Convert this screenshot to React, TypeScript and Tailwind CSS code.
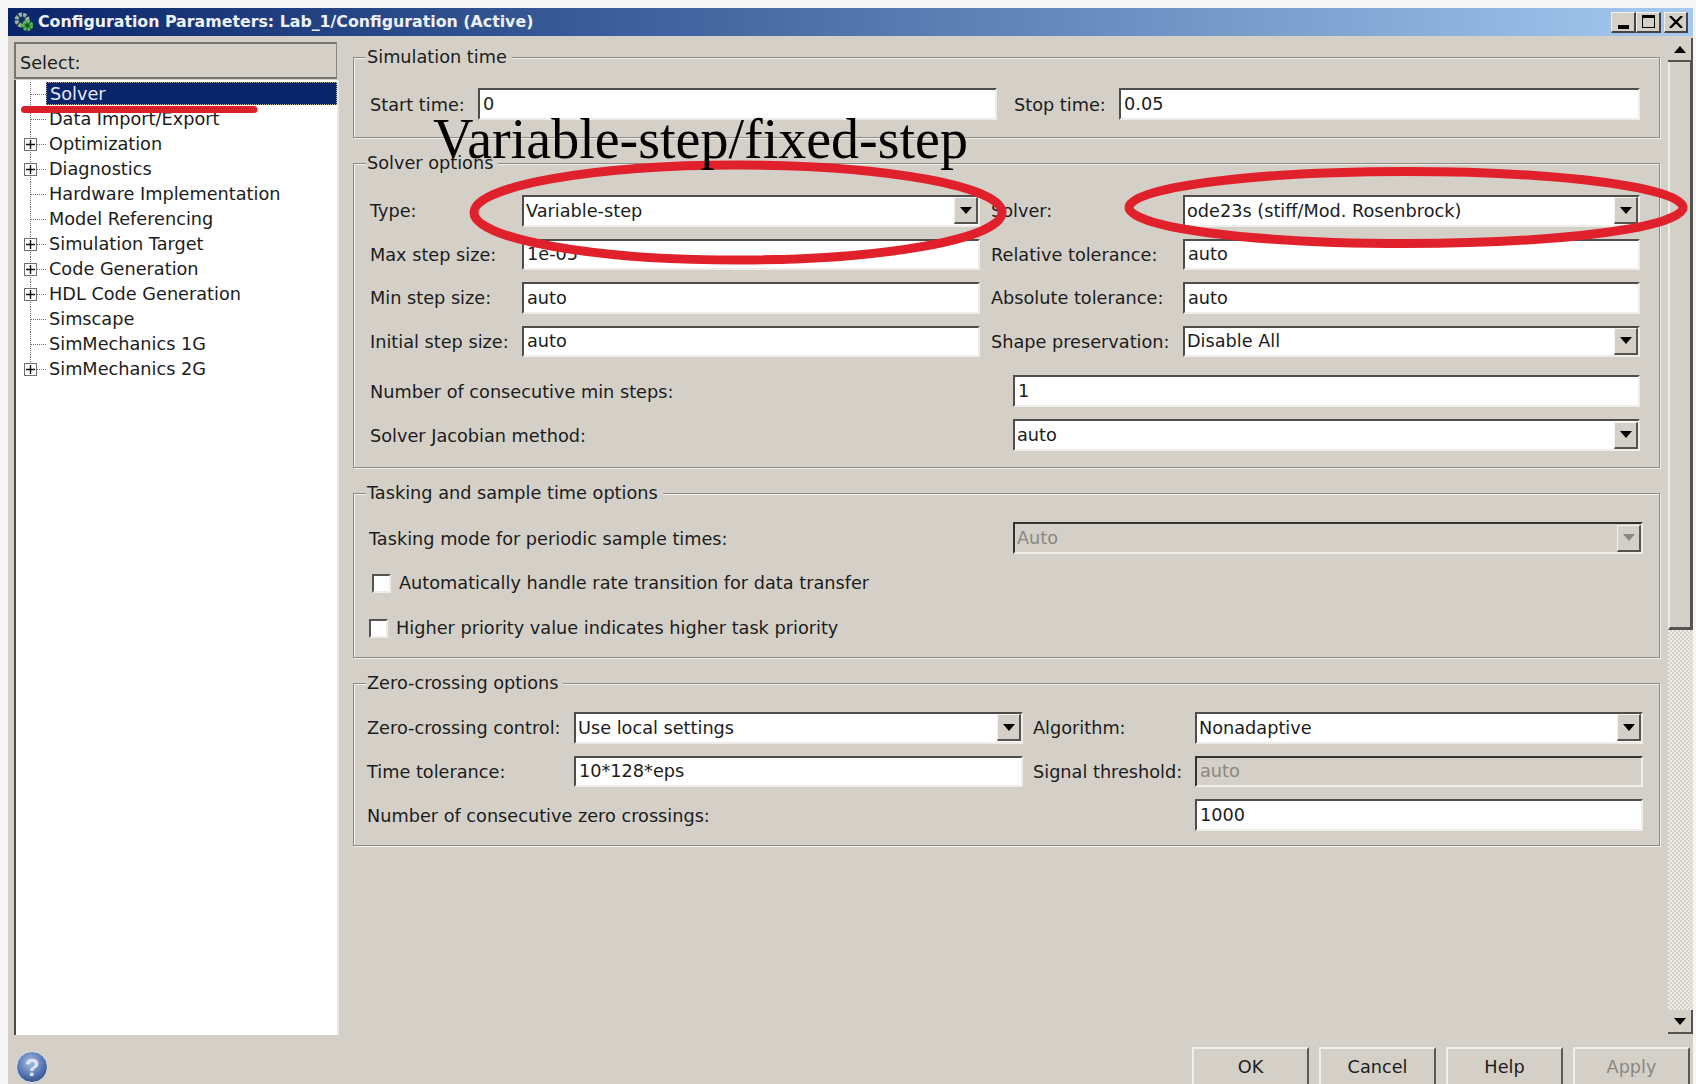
import React from "react";

const uiFont = "font-['DejaVu_Sans',sans-serif]";

function Arrow({ up = false, muted = false }: { up?: boolean; muted?: boolean }) {
  return (
    <svg width="12" height="7" viewBox="0 0 12 7" className={up ? "rotate-180" : ""}>
      <path d="M0 0h12L6 7z" fill={muted ? "#8a8782" : "#000"} />
    </svg>
  );
}

function Label({ children, className }: { children: React.ReactNode; className: string }) {
  return <span className={`shrink-0 pt-[2px] ${className}`}>{children}</span>;
}

function Field({ value, className = "", disabled = false, select = false }: { value: string; className?: string; disabled?: boolean; select?: boolean }) {
  return (
    <div
      className={`box-border flex items-center border-2 border-r-[#efede8] border-b-[#efede8] ${disabled ? "border-t-[#33322f] border-l-[#33322f] bg-[#d4d0c8] text-[#8a8782]" : "border-t-[#4f4d49] border-l-[#4f4d49] bg-white text-[#1c1c1c]"} ${className}`}
    >
      <span className={`flex-1 pt-[2px] ${select ? "pl-[2px]" : "pl-[3px]"} leading-none`}>{value}</span>
      {select && (
        <span className="flex h-[27px] w-[24px] items-center justify-center border-t border-l border-r-2 border-b-2 border-t-[#f4f2ee] border-l-[#f4f2ee] border-r-[#55534f] border-b-[#55534f] bg-[#d4d0c8]">
          <Arrow muted={disabled} />
        </span>
      )}
    </div>
  );
}

function Group({ title, className, children }: { title: string; className: string; children?: React.ReactNode }) {
  return (
    <section className={`relative box-border border border-[#8f8c86] shadow-[inset_1px_1px_0_#f2f0ec,1px_1px_0_#f2f0ec] ${className}`}>
      <span className="absolute -top-[13px] left-[12px] bg-[#d4d0c8] pl-[1px] pr-[5px] leading-[24px]">{title}</span>
      {children}
    </section>
  );
}

function CheckRow({ label, className }: { label: string; className: string }) {
  return (
    <div className={`flex h-[20px] items-center gap-[8px] ${className}`}>
      <span className="box-border h-[19px] w-[19px] border-2 border-t-[#55534f] border-l-[#55534f] border-r-[#efede8] border-b-[#efede8] bg-white" />
      <span className="pt-[1px]">{label}</span>
    </div>
  );
}

const treeItems: { label: string; expandable?: boolean; selected?: boolean }[] = [
  { label: "Solver", selected: true },
  { label: "Data Import/Export" },
  { label: "Optimization", expandable: true },
  { label: "Diagnostics", expandable: true },
  { label: "Hardware Implementation" },
  { label: "Model Referencing" },
  { label: "Simulation Target", expandable: true },
  { label: "Code Generation", expandable: true },
  { label: "HDL Code Generation", expandable: true },
  { label: "Simscape" },
  { label: "SimMechanics 1G" },
  { label: "SimMechanics 2G", expandable: true },
];

function TreeRow({ label, expandable, selected, last }: { label: string; expandable?: boolean; selected?: boolean; last?: boolean }) {
  return (
    <div className="flex h-[25px] items-start">
      <div className="relative h-[25px] w-[30px] shrink-0">
        <span className={`absolute left-[14px] top-0 border-l border-dotted border-[#6f6f6f] ${last ? "h-[13px]" : "h-[25px]"}`} />
        <span className="absolute left-[15px] top-[12px] w-[15px] border-t border-dotted border-[#6f6f6f]" />
        {expandable && (
          <span className="absolute left-[8px] top-[6px] flex h-[13px] w-[13px] items-center justify-center border border-[#6e6e6e] bg-white">
            <svg width="9" height="9" viewBox="0 0 9 9">
              <path d="M0 4.5h9M4.5 0v9" stroke="#111" strokeWidth="1.4" />
            </svg>
          </span>
        )}
      </div>
      <div
        className={`h-[23px] flex-1 pl-[3px] ${selected ? "border border-dotted border-[#b9b29a] bg-[#0a246a] leading-[22px] text-[#e8e8f0]" : "leading-[24px] text-[#1c1c1c]"}`}
      >
        {label}
      </div>
    </div>
  );
}

function DialogButton({ label, muted = false }: { label: string; muted?: boolean }) {
  return (
    <div
      className={`box-border flex h-[37px] w-[117px] items-center justify-center border-t-2 border-l-2 border-r-2 border-t-[#f0eeea] border-l-[#f0eeea] border-r-[#5a5853] pt-[2px] ${muted ? "text-[#8a8782]" : "text-[#1c1c1c]"}`}
    >
      {label}
    </div>
  );
}

const captionButton =
  "flex h-[21px] items-center justify-center border-t border-l border-r-2 border-b-2 border-t-[#f4f2ee] border-l-[#f4f2ee] border-r-[#444] border-b-[#444] bg-[#d4d0c8]";

export default function App() {
  return (
    <div className={`relative box-border flex h-[1084px] w-[1696px] flex-col overflow-hidden bg-[#f6f6f6] pl-[8px] pr-[3px] pt-[8px] text-[17.7px] ${uiFont}`}>
      {/* Window caption */}
      <header className="flex h-[28px] shrink-0 items-center bg-gradient-to-r from-[#0a246a] to-[#a6caf0] pl-[5px] pr-[5px]">
        <svg width="22" height="22" viewBox="0 0 22 22" className="mr-[3px] shrink-0">
          <circle cx="9" cy="9" r="5.5" fill="#10306e" stroke="#9db596" strokeWidth="4" strokeDasharray="3.2 1.2" />
          <circle cx="14.5" cy="14.5" r="4" fill="#1d5a30" stroke="#4fc044" strokeWidth="3.4" strokeDasharray="2.6 1" />
        </svg>
        <span className="flex-1 text-[15.8px] font-bold leading-none text-[#eef2f8]">Configuration Parameters: Lab_1/Configuration (Active)</span>
        <div className="flex items-center">
          <span className={`${captionButton} w-[25px] !items-end !justify-start pb-[2px] pl-[6px]`}>
            <span className="block h-[4px] w-[11px] bg-black" />
          </span>
          <span className={`${captionButton} w-[25px]`}>
            <span className="block h-[13px] w-[13px] border border-t-[3px] border-black" />
          </span>
          <span className={`${captionButton} ml-[3px] w-[24px]`}>
            <svg width="14" height="12" viewBox="0 0 14 12">
              <path d="M1 0l12 12M13 0L1 12" stroke="#000" strokeWidth="2.4" />
            </svg>
          </span>
        </div>
      </header>

      <div className="flex min-h-0 flex-1 bg-[#d4d0c8]">
        {/* Category tree */}
        <aside className="flex w-[345px] shrink-0 flex-col pl-[6px] pt-[6px]">
          <div className="box-border flex h-[37px] w-[323px] items-center border-t-2 border-l-2 border-r border-b-2 border-t-[#77756f] border-l-[#77756f] border-r-[#8a8782] border-b-[#77756f] pl-[4px] pt-[5px] text-[#1c1c1c]">
            Select:
          </div>
          <div className="mt-[1px] box-border h-[955px] w-[325px] border-l-2 border-r-2 border-l-[#4a4a48] border-r-[#e8e6e0] bg-white pt-[2px]">
            {treeItems.map((item, i) => (
              <TreeRow key={item.label} {...item} last={i === treeItems.length - 1} />
            ))}
          </div>
          <div className="flex flex-1 items-end pl-[2px] pb-[1px]">
            <svg width="32" height="32" viewBox="0 0 32 32">
              <defs>
                <radialGradient id="helpBall" cx="45%" cy="35%" r="70%">
                  <stop offset="0%" stopColor="#a9bfe0" />
                  <stop offset="60%" stopColor="#5877b4" />
                  <stop offset="100%" stopColor="#2c4880" />
                </radialGradient>
              </defs>
              <circle cx="16" cy="16" r="15.5" fill="url(#helpBall)" stroke="#dfe3ea" />
              <text x="16" y="25" textAnchor="middle" fontSize="24" fontWeight="700" fill="#dfe6f2" fontFamily="'Liberation Sans',sans-serif">?</text>
            </svg>
          </div>
        </aside>

        {/* Option groups */}
        <main className="flex w-[1307px] shrink-0 flex-col gap-[25px] pt-[21px] text-[#1c1c1c]">
          <Group title="Simulation time" className="h-[81px] pl-[16px] pt-[30px]">
            <div className="flex h-[32px] items-center">
              <Label className="w-[108px]">Start time:</Label>
              <Field value="0" className="h-[32px] w-[519px]" />
              <Label className="ml-[17px] w-[105px]">Stop time:</Label>
              <Field value="0.05" className="h-[32px] w-[521px]" />
            </div>
          </Group>

          <Group title="Solver options" className="h-[305px] pl-[16px] pt-[31px]">
            <div className="flex flex-col gap-[12px]">
              <div className="flex h-[31.5px] items-center">
                <Label className="w-[152px]">Type:</Label>
                <Field value="Variable-step" select className="h-[31.5px] w-[458px]" />
                <Label className="ml-[11px] w-[192px]">Solver:</Label>
                <Field value="ode23s (stiff/Mod. Rosenbrock)" select className="h-[31.5px] w-[457px]" />
              </div>
              <div className="flex h-[31.5px] items-center">
                <Label className="w-[152px]">Max step size:</Label>
                <Field value="1e-05" className="h-[31.5px] w-[458px]" />
                <Label className="ml-[11px] w-[192px]">Relative tolerance:</Label>
                <Field value="auto" className="h-[31.5px] w-[457px]" />
              </div>
              <div className="flex h-[31.5px] items-center">
                <Label className="w-[152px]">Min step size:</Label>
                <Field value="auto" className="h-[31.5px] w-[458px]" />
                <Label className="ml-[11px] w-[192px]">Absolute tolerance:</Label>
                <Field value="auto" className="h-[31.5px] w-[457px]" />
              </div>
              <div className="flex h-[31.5px] items-center">
                <Label className="w-[152px]">Initial step size:</Label>
                <Field value="auto" className="h-[31.5px] w-[458px]" />
                <Label className="ml-[11px] w-[192px]">Shape preservation:</Label>
                <Field value="Disable All" select className="h-[31.5px] w-[457px]" />
              </div>
              <div className="mt-[6px] flex h-[32px] items-center">
                <Label className="w-[643px]">Number of consecutive min steps:</Label>
                <Field value="1" className="h-[32px] w-[627px]" />
              </div>
              <div className="flex h-[32px] items-center">
                <Label className="w-[643px]">Solver Jacobian method:</Label>
                <Field value="auto" select className="h-[32px] w-[627px]" />
              </div>
            </div>
          </Group>

          <Group title="Tasking and sample time options" className="h-[165px] pl-[15px] pt-[28px]">
            <div className="flex h-[32px] items-center">
              <Label className="w-[644px]">Tasking mode for periodic sample times:</Label>
              <Field value="Auto" select disabled className="h-[32px] w-[630px]" />
            </div>
            <CheckRow label="Automatically handle rate transition for data transfer" className="ml-[3px] mt-[19px]" />
            <CheckRow label="Higher priority value indicates higher task priority" className="mt-[25px]" />
          </Group>

          <Group title="Zero-crossing options" className="h-[163px] pl-[13px] pt-[28px]">
            <div className="flex flex-col gap-[12px]">
              <div className="flex h-[31.5px] items-center">
                <Label className="w-[207px]">Zero-crossing control:</Label>
                <Field value="Use local settings" select className="h-[31.5px] w-[449px]" />
                <Label className="ml-[10px] w-[162px]">Algorithm:</Label>
                <Field value="Nonadaptive" select className="h-[31.5px] w-[448px]" />
              </div>
              <div className="flex h-[31.5px] items-center">
                <Label className="w-[207px]">Time tolerance:</Label>
                <Field value="10*128*eps" className="h-[31.5px] w-[449px]" />
                <Label className="ml-[10px] w-[162px]">Signal threshold:</Label>
                <Field value="auto" disabled className="h-[31.5px] w-[448px]" />
              </div>
              <div className="flex h-[32px] items-center">
                <Label className="w-[828px]">Number of consecutive zero crossings:</Label>
                <Field value="1000" className="h-[32px] w-[448px]" />
              </div>
            </div>
          </Group>

          {/* Dialog buttons */}
          <div className="mt-auto flex justify-end gap-[10px] [margin-right:-30px]">
            <DialogButton label="OK" />
            <DialogButton label="Cancel" />
            <DialogButton label="Help" />
            <DialogButton label="Apply" muted />
          </div>
        </main>

        {/* Vertical scroll bar */}
        <div className="ml-[8px] flex h-[998px] w-[25px] shrink-0 flex-col pt-[2px]">
          <div className="flex h-[24px] items-center justify-center border-r-2 border-b-2 border-r-[#55534f] border-b-[#55534f] bg-[#d4d0c8]">
            <Arrow up />
          </div>
          <div className="box-border h-[568px] border-l-2 border-r-[3px] border-b-[3px] border-l-[#efede8] border-r-[#55534f] border-b-[#55534f] bg-[#d4d0c8]" />
          <div className="flex-1 [background-image:repeating-conic-gradient(#d4d0c8_0_25%,#efede8_0_50%)] [background-size:4px_4px]" />
          <div className="flex h-[24px] items-center justify-center border-r-2 border-b-2 border-r-[#55534f] border-b-[#55534f] bg-[#d4d0c8]">
            <Arrow />
          </div>
        </div>
      </div>

      {/* Hand-drawn markup on top of the dialog */}
      <svg className="pointer-events-none absolute left-0 top-0" width="1696" height="1084" viewBox="0 0 1696 1084" fill="none">
        <path d="M24.5 109.5H254" stroke="#d9202a" strokeWidth="7" strokeLinecap="round" />
        <ellipse cx="738" cy="212.5" rx="264" ry="47.5" stroke="#e0212b" strokeWidth="9" />
        <ellipse cx="1406" cy="207.5" rx="277" ry="36" stroke="#e0212b" strokeWidth="9" />
      </svg>
      <span className="pointer-events-none absolute left-[433px] top-[105px] font-['Liberation_Serif',serif] text-[56px] leading-[68px] text-black">
        Variable-step/fixed-step
      </span>
    </div>
  );
}
